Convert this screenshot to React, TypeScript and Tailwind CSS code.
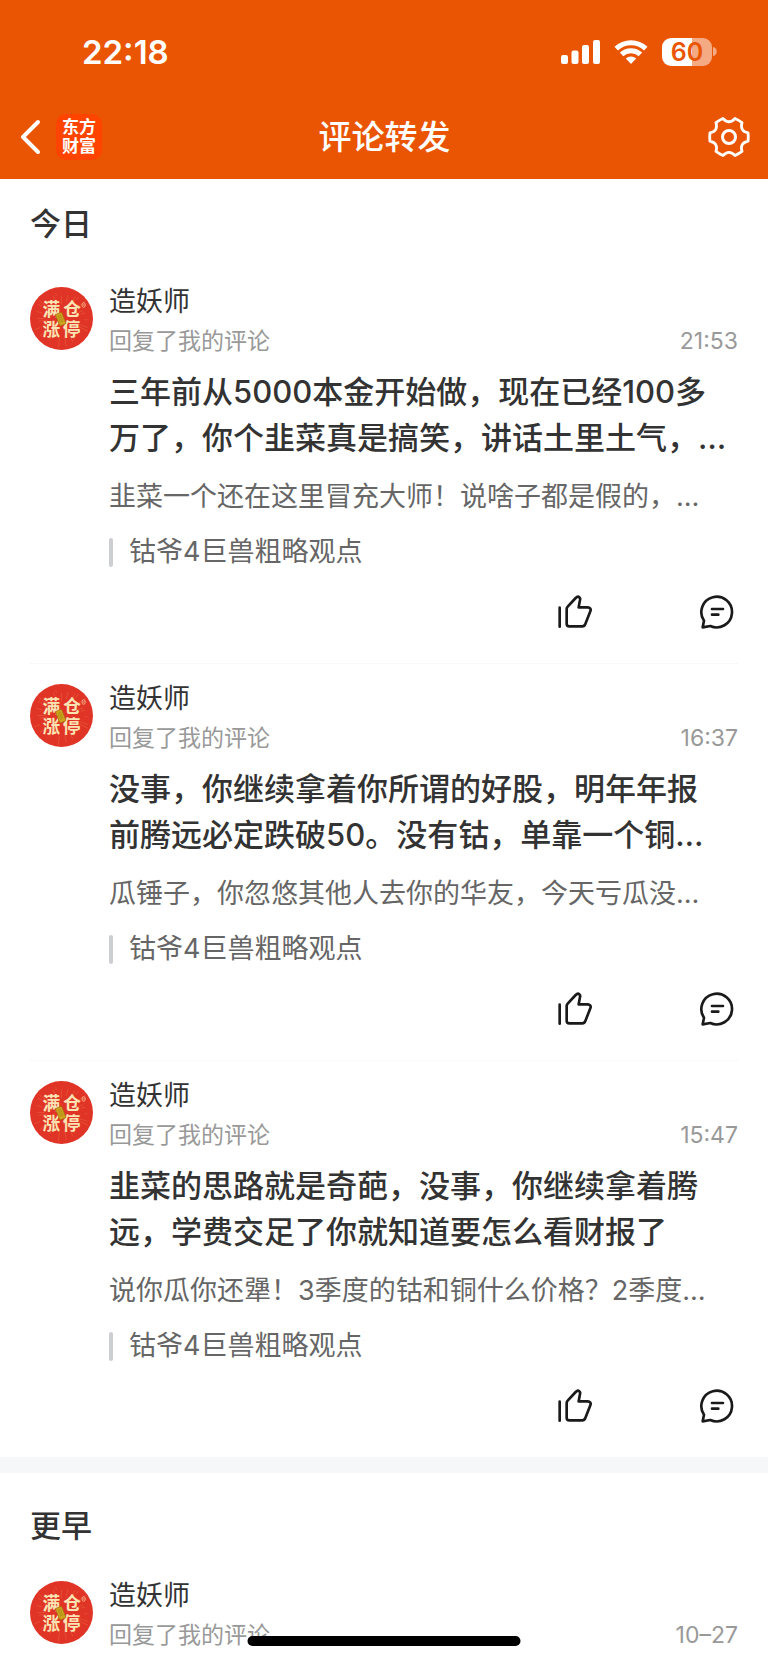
/**
 * App.tsx
 *
 * "评论转发" screen: replies to my comments, grouped by day.
 *
 * Structure:
 *  - Orange header: status bar + nav row (back, title, settings)
 *  - One section per day group, each with a list of replies
 *  - Home indicator floating over the bottom of the list
 */

type Reply = {
  id: number;
  author: string;
  time: string;
  lines: string[];
  original: string;
  topic: string;
};

type Group = {
  heading: string;
  replies: Reply[];
};

/** Replies grouped by day, newest first. */
const GROUPS: Group[] = [
  {
    heading: "今日",
    replies: [
      {
        id: 1,
        author: "造妖师",
        time: "21:53",
        lines: [
          "三年前从5000本金开始做，现在已经100多",
          "万了，你个韭菜真是搞笑，讲话土里土气，…",
        ],
        original: "韭菜一个还在这里冒充大师！说啥子都是假的，…",
        topic: "钴爷4巨兽粗略观点",
      },
      {
        id: 2,
        author: "造妖师",
        time: "16:37",
        lines: [
          "没事，你继续拿着你所谓的好股，明年年报",
          "前腾远必定跌破50。没有钴，单靠一个铜…",
        ],
        original: "瓜锤子，你忽悠其他人去你的华友，今天亏瓜没…",
        topic: "钴爷4巨兽粗略观点",
      },
      {
        id: 3,
        author: "造妖师",
        time: "15:47",
        lines: [
          "韭菜的思路就是奇葩，没事，你继续拿着腾",
          "远，学费交足了你就知道要怎么看财报了",
        ],
        original: "说你瓜你还犟！3季度的钴和铜什么价格？2季度…",
        topic: "钴爷4巨兽粗略观点",
      },
    ],
  },
  {
    heading: "更早",
    replies: [
      { id: 4, author: "造妖师", time: "10–27", lines: [], original: "", topic: "" },
    ],
  },
];

/** Point on a circle around the origin, as an SVG coordinate pair. */
function polar(deg: number, r: number) {
  const a = (deg * Math.PI) / 180;
  return `${(r * Math.cos(a)).toFixed(2)} ${(r * Math.sin(a)).toFixed(2)}`;
}

/** Six-lobed cog outline: blunt lobes joined by concave curves. */
const COG_PATH =
  [0, 60, 120, 180, 240, 300]
    .map(
      (a, i) =>
        `${i === 0 ? "M" : "L"}${polar(a - 12, 19.5)}Q${polar(a, 19.5)} ${polar(a + 12, 19.5)}Q${polar(a + 30, 12)} ${polar(a + 48, 19.5)}`,
    )
    .join("") + "Z";

/** Sunburst strokes behind the avatar lettering. */
const RAYS = Array.from({ length: 28 }, (_, i) => ({
  angle: i * (360 / 28) + (i % 3) * 3,
  from: 42 + (i % 4) * 9,
  to: 68 + (i % 5) * 5,
}));

function StatusBar() {
  return (
    <div className="flex h-[103px] items-center justify-between pl-[82px] pr-[51px]">
      <span className="text-[33px] font-semibold leading-10">22:18</span>
      <div className="flex items-center">
        <svg width="39" height="24" viewBox="0 0 39 24" fill="currentColor" aria-hidden="true">
          <rect x="0" y="15" width="7" height="9" rx="2" />
          <rect x="10.5" y="10.5" width="7" height="13.5" rx="2" />
          <rect x="21" y="5" width="7" height="19" rx="2" />
          <rect x="32" y="0" width="7" height="24" rx="2" />
        </svg>
        <svg className="ml-[14px]" width="34" height="24" viewBox="0 0 34 24" aria-hidden="true">
          <g fill="none" stroke="currentColor" strokeWidth="5">
            <path d="M2.2 8.6a21.5 21.5 0 0 1 29.6 0" />
            <path d="M7.6 14.4a13.6 13.6 0 0 1 18.8 0" />
          </g>
          <path d="M17 24l-5.2-5.4a7.6 7.6 0 0 1 10.4 0z" fill="currentColor" />
        </svg>
        <div className="ml-[14px] flex h-7 w-[50px] items-center justify-center rounded-[9px] bg-[linear-gradient(to_right,#fff_60%,#f4aa82_60%)] text-[25px] font-semibold leading-7 text-[#ea5504]">
          60
        </div>
        <svg className="ml-px" width="4" height="9" viewBox="0 0 4 9" aria-hidden="true">
          <path d="M0 0a4.6 4.6 0 0 1 0 9z" fill="#f4aa82" />
        </svg>
      </div>
    </div>
  );
}

function NavBar() {
  return (
    <div className="grid h-[67px] grid-cols-[1fr_auto_1fr] items-center pl-[18px] pr-[17px]">
      <div className="flex items-center gap-[14px]">
        <button type="button" aria-label="返回">
          <svg width="24" height="36" viewBox="0 0 24 36" fill="none" stroke="currentColor" strokeWidth="4" strokeLinecap="round" strokeLinejoin="round">
            <path d="M20 3L5 18l15 15" />
          </svg>
        </button>
        <div className="flex h-[46px] w-[46px] flex-col items-center justify-center rounded-[10px] bg-[#ff4400] text-[17px] font-bold leading-[19px]">
          <span>东方</span>
          <span>财富</span>
        </div>
      </div>
      <h1 className="text-[33px] font-medium leading-10">评论转发</h1>
      <button type="button" aria-label="设置" className="justify-self-end">
        <svg width="44" height="44" viewBox="-22 -22 44 44" fill="none" stroke="currentColor" strokeWidth="2.8" strokeLinejoin="round">
          <path d={COG_PATH} />
          <circle r="6.5" strokeWidth="3" />
        </svg>
      </button>
    </div>
  );
}

function Avatar() {
  return (
    <svg className="h-[63px] w-[63px] shrink-0" viewBox="0 0 189 189" aria-hidden="true">
      <circle cx="94.5" cy="94.5" r="94.5" fill="#e03426" />
      <g stroke="#ef7a4c" strokeWidth="1.5" opacity="0.7">
        {RAYS.map((ray) => (
          <line
            key={ray.angle}
            x1="94.5"
            x2="94.5"
            y1={94.5 - ray.from}
            y2={94.5 - ray.to}
            transform={`rotate(${ray.angle} 94.5 94.5)`}
          />
        ))}
      </g>
      <g fill="#fbe3b3" fontSize="53" fontWeight="700" textAnchor="middle">
        <text x="64" y="87">满</text>
        <text x="126" y="87">仓</text>
        <text x="64" y="147">涨</text>
        <text x="125" y="147">停</text>
      </g>
      <g transform="rotate(-22 92 96)">
        <rect x="82" y="78" width="20" height="37" rx="3" fill="#d2a41c" stroke="#a06a12" strokeWidth="2" />
        <path d="M88 84v24M92 84v24M96 84v24" stroke="#7f7a1c" strokeWidth="1.5" strokeDasharray="4 2" />
      </g>
      <ellipse cx="161" cy="54" rx="5" ry="7" fill="none" stroke="#f6b98c" strokeWidth="2.5" />
      <path d="M158 52h6M158 56h6" stroke="#f6b98c" strokeWidth="1.5" />
    </svg>
  );
}

function LikeIcon() {
  return (
    <svg width="36" height="36" viewBox="0 0 108 108" fill="none" stroke="currentColor" strokeWidth="8" strokeLinecap="round" strokeLinejoin="round">
      <path d="M8 41v57" />
      <path d="M29 45c0-3 1-5 3-7l24-26c3-3 8-5 11-2c3 2 3 5 2 8l-4 22h27c7 0 11 5 8 12l-15 38c-2 5-4 7-9 7H37c-5 0-8-3-8-8z" />
    </svg>
  );
}

function CommentIcon() {
  return (
    <svg width="36" height="36" viewBox="0 0 108 108" fill="none" stroke="currentColor" strokeWidth="8" strokeLinecap="round" strokeLinejoin="round">
      <path d="M15 80A46 46 0 1 1 34 96L11 100z" />
      <path d="M39 45h33M39 62h19" />
    </svg>
  );
}

function ReplyItem({ reply }: { reply: Reply }) {
  return (
    <li className="flex gap-4 pt-5">
      <Avatar />
      <div className="min-w-0 flex-1">
        <p className="-mt-px text-[27px] leading-8 text-[#333]">{reply.author}</p>
        <div className="mt-[7px] flex items-center justify-between text-[23px] leading-8 text-[#999]">
          <span>回复了我的评论</span>
          <time>{reply.time}</time>
        </div>

        {reply.lines.length > 0 && (
          <>
            <p className="mt-3 whitespace-nowrap text-[31px] font-medium leading-[46px] text-[#333]">
              {reply.lines.map((line) => (
                <span key={line} className="block">
                  {line}
                </span>
              ))}
            </p>
            <p className="mt-[18px] whitespace-nowrap text-[27px] leading-9 text-[#666]">{reply.original}</p>
            <a href="#topic" className="mt-[19px] flex items-center gap-4 text-[27px] leading-9 text-[#666]">
              <span className="h-[29px] w-1 rounded-sm bg-[#ccced2]" />
              {reply.topic}
            </a>

            {/* Like / comment actions */}
            <div className="mt-6 flex justify-end gap-[106px] pb-[33px] pr-[3px] text-[#1a1a1a]">
              <button type="button" aria-label="点赞">
                <LikeIcon />
              </button>
              <button type="button" aria-label="评论">
                <CommentIcon />
              </button>
            </div>
          </>
        )}
      </div>
    </li>
  );
}

export default function App() {
  return (
    <div className="min-h-screen bg-white font-['Inter','Noto_Sans_CJK_SC',sans-serif]" lang="zh-CN">
      <header className="h-[179px] bg-[#ea5504] text-white">
        <StatusBar />
        <NavBar />
      </header>

      <main>
        {GROUPS.map((group, index) => (
          <section key={group.heading} className="border-[#f6f7f9] not-first:border-t-[16px]">
            <h2
              className={`px-[30px] text-[31px] font-medium leading-[46px] text-[#333] ${
                index === 0 ? "pb-5 pt-[22px]" : "pb-3 pt-[30px]"
              }`}
            >
              {group.heading}
            </h2>
            <ul className="mx-[30px] divide-y divide-[#f8f8f8]">
              {group.replies.map((reply) => (
                <ReplyItem key={reply.id} reply={reply} />
              ))}
            </ul>
          </section>
        ))}
      </main>

      {/* Home indicator */}
      <div className="fixed bottom-[17px] left-1/2 h-2.5 w-[273px] -translate-x-1/2 rounded-full bg-black" />
    </div>
  );
}
